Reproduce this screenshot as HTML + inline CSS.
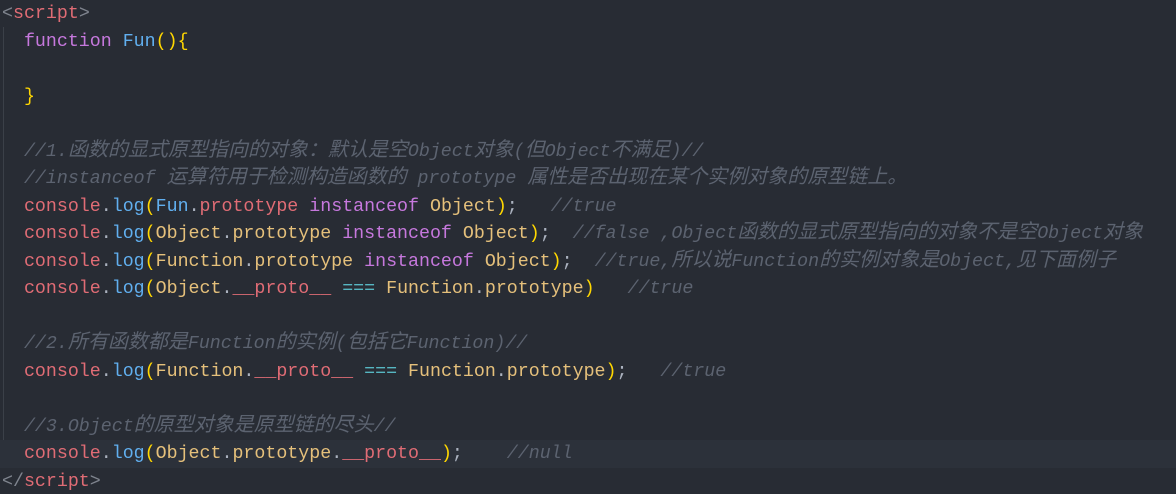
<!DOCTYPE html>
<html><head><meta charset="utf-8"><style>
html,body{margin:0;padding:0;background:#282c34;width:1176px;height:494px;overflow:hidden}
.c{position:relative;font-family:"Liberation Mono","Noto Sans CJK SC",monospace;font-size:18.3px;color:#abb2bf;}
.l{height:27.5px;line-height:29px;white-space:pre;padding-left:2px;position:relative}
.hl{background:#2c313a}
.r{color:#e06c75}.b{color:#61afef}.p{color:#c678dd}.y{color:#e5c07b}.g{color:#ffd700}.cm{color:#5c6370;font-style:italic}.cy{color:#56b6c2}.gr{color:#7f848e}
.k{font-size:20px;font-family:"Noto Sans CJK SC",sans-serif;line-height:1}
.guide{position:absolute;left:3px;top:27px;width:1px;height:439px;background:#3b4048}
</style></head><body><div class="c">
<div class="guide"></div>
<div class="l"><span class="gr">&lt;</span><span class="r">script</span><span class="gr">&gt;</span></div>
<div class="l">  <span class="p">function</span> <span class="b">Fun</span><span class="g">(){</span></div>
<div class="l"> </div>
<div class="l">  <span class="g">}</span></div>
<div class="l"> </div>
<div class="l">  <span class="cm">//1.<span class="k">函数的显式原型指向的对象：默认是空</span>Object<span class="k">对象</span>(<span class="k">但</span>Object<span class="k">不满足</span>)//</span></div>
<div class="l">  <span class="cm">//instanceof <span class="k">运算符用于检测构造函数的</span> prototype <span class="k">属性是否出现在某个实例对象的原型链上。</span></span></div>
<div class="l">  <span class="r">console</span>.<span class="b">log</span><span class="g">(</span><span class="b">Fun</span>.<span class="r">prototype</span> <span class="p">instanceof</span> <span class="y">Object</span><span class="g">)</span>;   <span class="cm">//true</span></div>
<div class="l">  <span class="r">console</span>.<span class="b">log</span><span class="g">(</span><span class="y">Object</span>.<span class="y">prototype</span> <span class="p">instanceof</span> <span class="y">Object</span><span class="g">)</span>;  <span class="cm">//false ,Object<span class="k">函数的显式原型指向的对象不是空</span>Object<span class="k">对象</span></span></div>
<div class="l">  <span class="r">console</span>.<span class="b">log</span><span class="g">(</span><span class="y">Function</span>.<span class="y">prototype</span> <span class="p">instanceof</span> <span class="y">Object</span><span class="g">)</span>;  <span class="cm">//true,<span class="k">所以说</span>Function<span class="k">的实例对象是</span>Object,<span class="k">见下面例子</span></span></div>
<div class="l">  <span class="r">console</span>.<span class="b">log</span><span class="g">(</span><span class="y">Object</span>.<span class="r">__proto__</span> <span class="cy">===</span> <span class="y">Function</span>.<span class="y">prototype</span><span class="g">)</span>   <span class="cm">//true</span></div>
<div class="l"> </div>
<div class="l">  <span class="cm">//2.<span class="k">所有函数都是</span>Function<span class="k">的实例</span>(<span class="k">包括它</span>Function)//</span></div>
<div class="l">  <span class="r">console</span>.<span class="b">log</span><span class="g">(</span><span class="y">Function</span>.<span class="r">__proto__</span> <span class="cy">===</span> <span class="y">Function</span>.<span class="y">prototype</span><span class="g">)</span>;   <span class="cm">//true</span></div>
<div class="l"> </div>
<div class="l">  <span class="cm">//3.Object<span class="k">的原型对象是原型链的尽头</span>//</span></div>
<div class="l hl">  <span class="r">console</span>.<span class="b">log</span><span class="g">(</span><span class="y">Object</span>.<span class="y">prototype</span>.<span class="r">__proto__</span><span class="g">)</span>;    <span class="cm">//null</span></div>
<div class="l"><span class="gr">&lt;/</span><span class="r">script</span><span class="gr">&gt;</span></div>
</div></body></html>
